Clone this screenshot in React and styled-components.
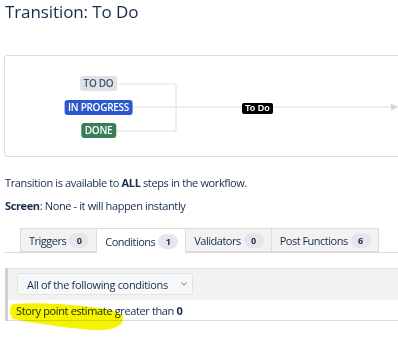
import React from "react";
import styled, { createGlobalStyle } from "styled-components";

const Global = createGlobalStyle`
  html, body { margin: 0; padding: 0; background: #fff; }
  body {
    width: 398px; height: 343px; overflow: hidden;
    font-family: "Open Sans", "Noto Sans", sans-serif;
    color: #172b4d;
  }
  * { box-sizing: border-box; }
`;

const Page = styled.div`
  padding-left: 4px;
  width: 398px;
`;

const Title = styled.h1`
  margin: 0;
  font-size: 17px;
  line-height: 23px;
  font-weight: 400;
  letter-spacing: -0.1px;
  color: #172b4d;
  padding-left: 1px;
`;

const Card = styled.div`
  margin-top: 32px;
  width: 440px;
  height: 102px;
  border: 1px solid #dcdcdc;
  border-radius: 3px;
`;

const Canvas = styled.div`
  position: relative;
  width: 100%;
  height: 100%;
`;

const Lines = styled.svg`
  position: absolute;
  left: 0;
  top: 0;
`;

const Lozenge = styled.span`
  position: absolute;
  left: 93.5px;
  top: ${(p) => p.$top}px;
  transform: translateX(-50%);
  height: 15px;
  padding: 0 4px;
  border-radius: 3px;
  font-size: 10px;
  line-height: 15px;
  font-weight: 600;
  letter-spacing: -0.3px;
  white-space: nowrap;
  background: ${(p) => p.$bg};
  color: ${(p) => p.$fg};
`;

const EdgeLabel = styled.span`
  position: absolute;
  left: 237px;
  top: 47px;
  height: 11px;
  padding: 0 3px;
  border-radius: 2px;
  background: #000;
  color: #fff;
  font-family: "Liberation Sans", Arial, sans-serif;
  font-weight: 700;
  font-size: 9px;
  line-height: 11px;
`;

const Para = styled.p`
  margin: ${(p) => p.$mt}px 0 0 1px;
  font-size: 11px;
  line-height: 16px;
  letter-spacing: -0.37px;
`;

const Tabs = styled.div`
  margin: 14px 0 0 1px;
  display: flex;
  padding-left: 15px;
  border-bottom: 1px solid #dcdcdc;
  height: 25px;
`;

const Tab = styled.div`
  display: flex;
  align-items: center;
  gap: 3px;
  height: ${(p) => (p.$active ? 25 : 24)}px;
  padding: 1px 7px 0 8px;
  border: 1px solid #dcdcdc;
  border-bottom: ${(p) => (p.$active ? "none" : "1px solid #dcdcdc")};
  border-left: ${(p) => (p.$first ? "1px solid #dcdcdc" : "none")};
  background: ${(p) => (p.$active ? "#fff" : "#f2f2f2")};
  font-size: 11px;
  letter-spacing: -0.5px;
  color: #172b4d;
  white-space: nowrap;
`;

const Badge = styled.span`
  display: inline-flex;
  align-items: center;
  justify-content: center;
  min-width: 20px;
  height: 15px;
  border-radius: 8px;
  background: #e4e6eb;
  font-size: 9px;
  font-weight: 700;
  letter-spacing: 0;
  color: #172b4d;
`;

const CondBox = styled.div`
  margin: 15px 0 0 1px;
  width: 420px;
  border-left: 3px solid #cfcfcf;
`;

const CondHeader = styled.div`
  background: #f2f2f2;
  border-top: 1px solid #e2e2e2;
  padding: 4px 0 5px 9px;
`;

const Select = styled.div`
  width: 176px;
  height: 22px;
  display: flex;
  align-items: center;
  justify-content: space-between;
  padding: 0 4px 0 9px;
  background: #f7f8f9;
  border: 1px solid #e4e4e4;
  border-radius: 3px;
  font-size: 11px;
  letter-spacing: -0.33px;
  color: #172b4d;
`;

const CondRow = styled.div`
  position: relative;
  height: 21px;
  padding: 3px 0 0 8px;
  border-bottom: 1px solid #dcdcdc;
  font-size: 11px;
  line-height: 16px;
  letter-spacing: -0.37px;
  background: #fff;
`;

const Highlight = styled.svg`
  position: absolute;
  left: -3px;
  top: 0;
  mix-blend-mode: multiply;
  pointer-events: none;
  overflow: visible;
`;

export default function App() {
  return (
    <>
      <Global />
      <Page>
        <Title>Transition: To Do</Title>
        <Card>
          <Canvas>
            <Lines width="440" height="100">
              <path d="M111 28 H171 V75 H111" fill="none" stroke="#e0e0e0" strokeWidth="1" />
              <path d="M126 51 H386" fill="none" stroke="#e0e0e0" strokeWidth="1.2" />
              <path d="M386 47.5 L393 51 L386 54.5 Z" fill="#d6d6d6" />
            </Lines>
            <Lozenge $top={20} $bg="#dfe1e6" $fg="#42526e">TO DO</Lozenge>
            <Lozenge $top={44} $bg="#2d57d0" $fg="#fff">IN PROGRESS</Lozenge>
            <Lozenge $top={67} $bg="#3b7f58" $fg="#fff">DONE</Lozenge>
            <EdgeLabel>To Do</EdgeLabel>
          </Canvas>
        </Card>
        <Para $mt={18}>
          Transition is available to <b>ALL</b> steps in the workflow.
        </Para>
        <Para $mt={7}>
          <b>Screen</b>: None - it will happen instantly
        </Para>
        <Tabs>
          <Tab $first>
            Triggers <Badge>0</Badge>
          </Tab>
          <Tab $active>
            Conditions <Badge>1</Badge>
          </Tab>
          <Tab>
            Validators <Badge>0</Badge>
          </Tab>
          <Tab>
            Post Functions <Badge>6</Badge>
          </Tab>
        </Tabs>
        <CondBox>
          <CondHeader>
            <Select>
              All of the following conditions
              <svg width="8" height="6" viewBox="0 0 8 6">
                <path d="M1.5 1.5 L4 4 L6.5 1.5" fill="none" stroke="#6b778c" strokeWidth="1" />
              </svg>
            </Select>
          </CondHeader>
          <CondRow>
            <Highlight width="120" height="30">
              <path
                d="M8 4 C 30 2, 70 4, 100 9 C 112 11, 119 13, 118 20 C 117 27, 105 31, 88 30 C 60 28, 30 23, 8 19 C 4 14, 4 6, 8 4 Z"
                fill="#f6f300"
              />
            </Highlight>
            Story point estimate greater than <b>0</b>
          </CondRow>
        </CondBox>
      </Page>
    </>
  );
}
